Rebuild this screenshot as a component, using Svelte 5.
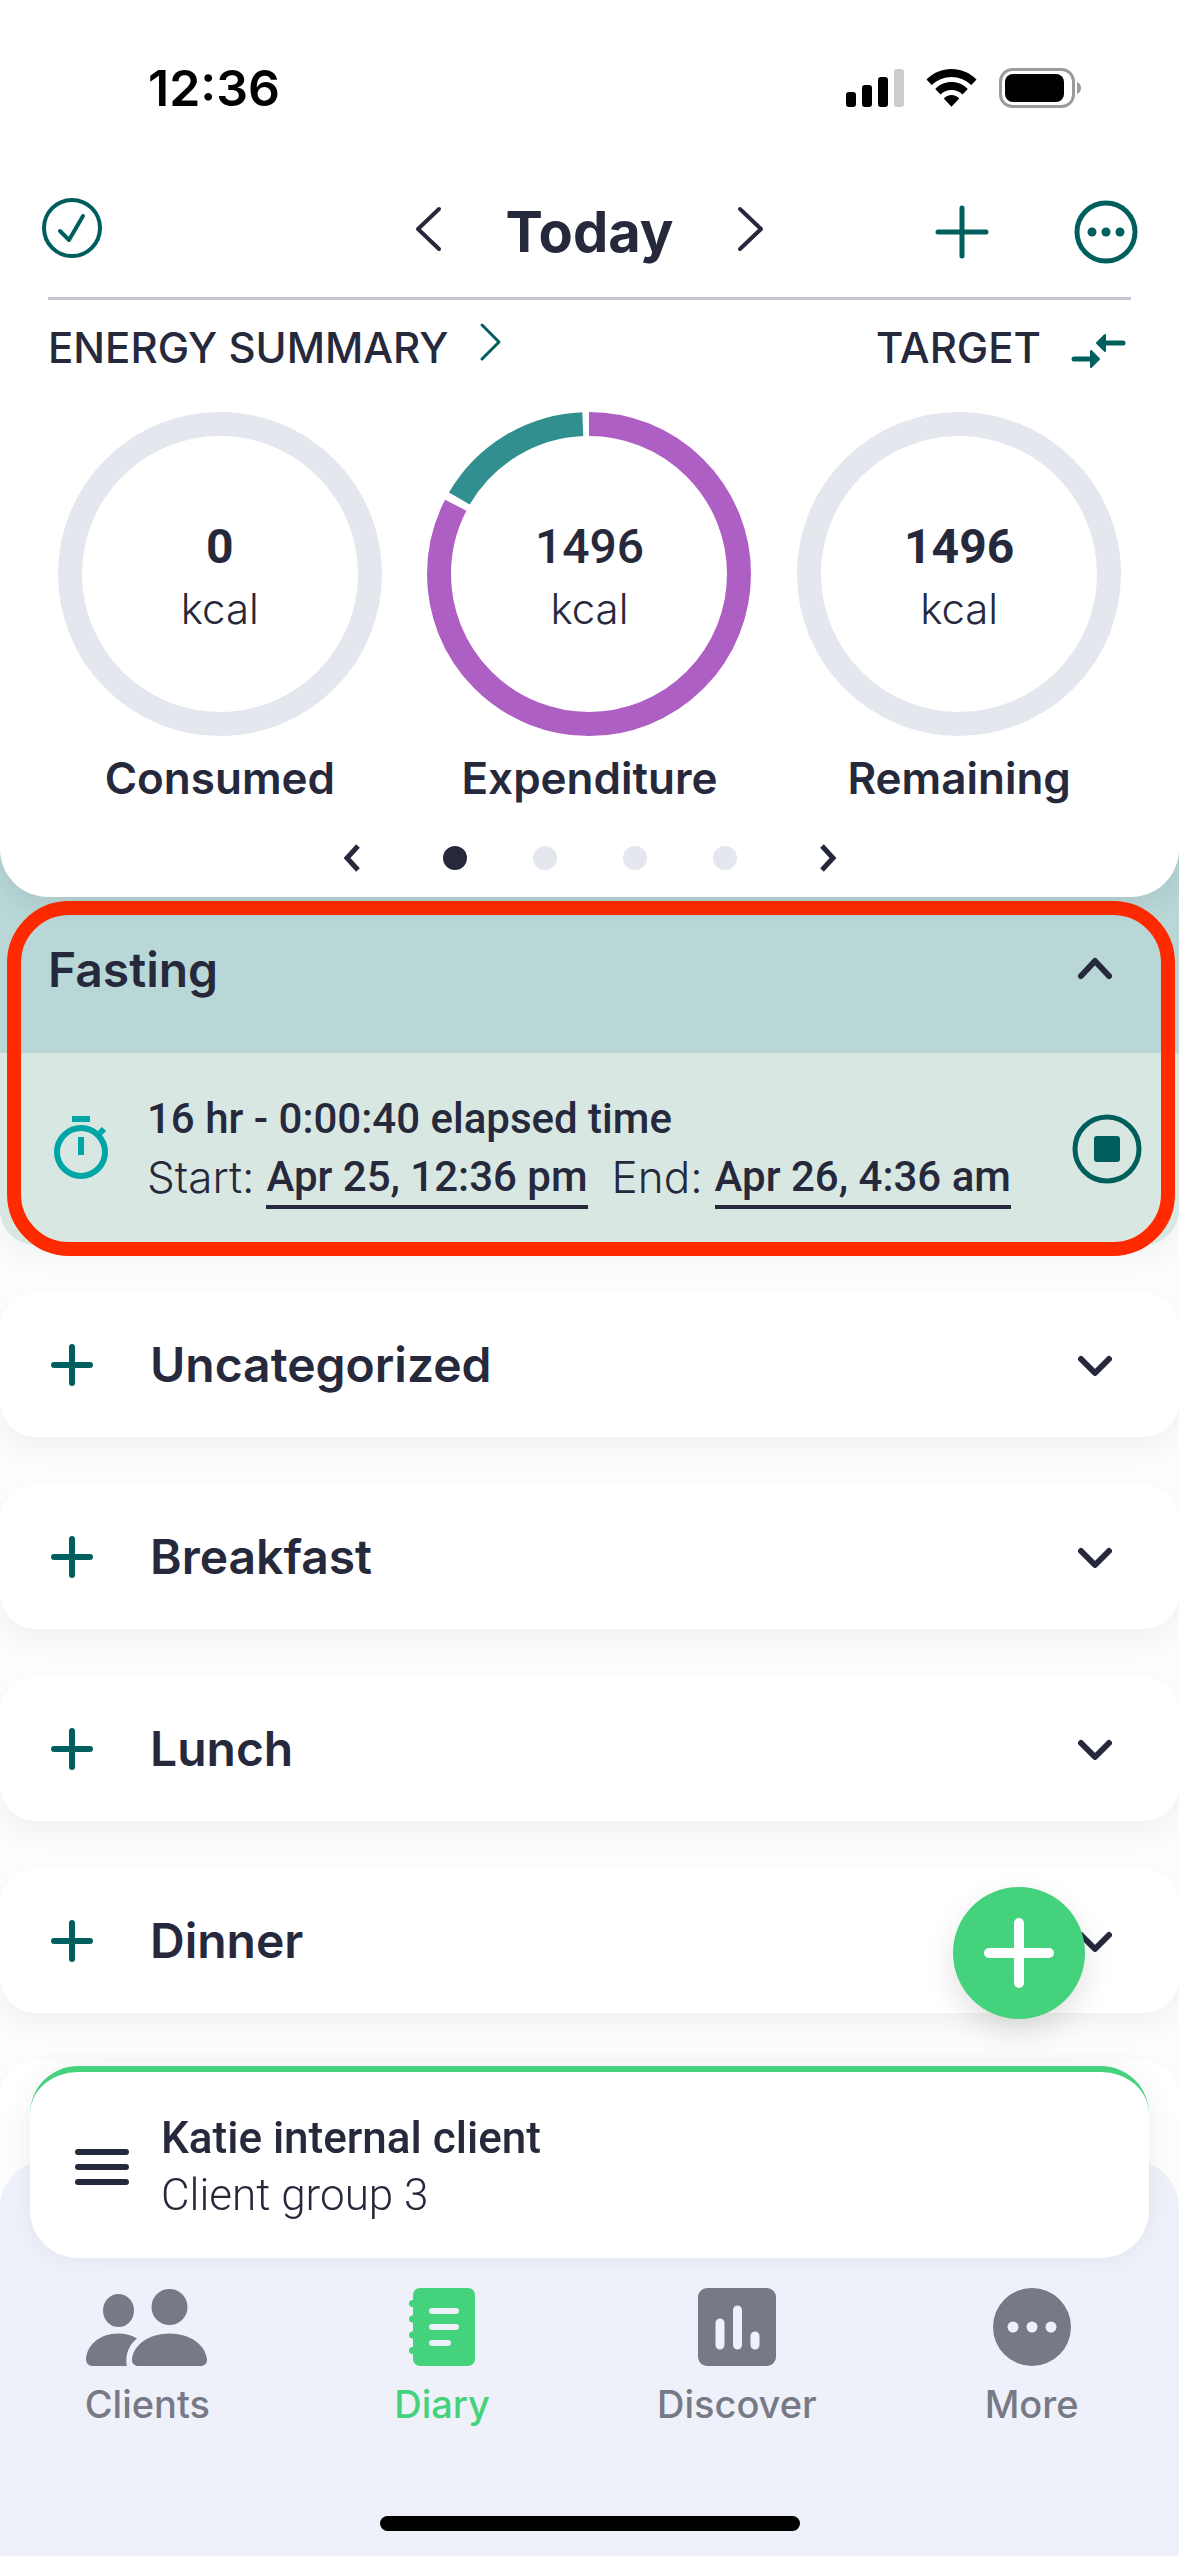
<script>
  const rings = [
    { label: 'Consumed', value: '0', strong: true, split: false },
    { label: 'Expenditure', value: '1496', strong: false, split: true },
    { label: 'Remaining', value: '1496', strong: true, split: false }
  ];
  const pages = [0, 1, 2, 3];
  const meals = ['Uncategorized', 'Breakfast', 'Lunch', 'Dinner'];
  const tabs = ['Clients', 'Diary', 'Discover', 'More'];

  let page = $state(0);
  let tab = $state('Diary');
</script>

<div class="app">
  <header class="summary">
    <div class="status">
      <span class="clock">12:36</span>
      <div class="indicators">
        <svg width="58" height="38" viewBox="0 0 58 38" aria-hidden="true">
          <rect x="0" y="23" width="10" height="15" rx="3" />
          <rect x="16" y="16" width="10" height="22" rx="3" />
          <rect x="32" y="8" width="10" height="30" rx="3" />
          <rect x="48" y="0" width="10" height="38" rx="3" fill="#ccc" />
        </svg>
        <svg width="51" height="38" viewBox="0 0 50 38" aria-hidden="true">
          <path d="M25 0C34.500 0 43 3.500 50 10.500L44.800 16C39 10.600 32.200 7.900 25 7.900S11 10.600 5.200 16L0 10.500C7 3.500 15.500 0 25 0z" />
          <path d="M25 13c6.200 0 12 2.400 16.300 7L36 25.600A15 15 0 0 0 25 21a15 15 0 0 0-11 4.600L8.700 20C13 15.400 18.800 13 25 13z" />
          <path d="M25 26c3 0 5.700 1.300 7.700 3.500L25 37.800l-7.700-8.300C19.300 27.300 22 26 25 26z" />
        </svg>
        <svg width="82" height="40" viewBox="0 0 82 40" aria-hidden="true">
          <rect x="1.500" y="1.500" width="73" height="37" rx="12" fill="none" stroke="#9b9b9b" stroke-width="3" />
          <rect x="6" y="6" width="59" height="28" rx="8" />
          <path d="M78 14c2.500 1 4 3.300 4 6s-1.500 5-4 6z" fill="#9b9b9b" />
        </svg>
      </div>
    </div>

    <div class="toolbar">
      <button class="left teal" aria-label="Mark day complete">
        <svg width="62" height="72" viewBox="0 0 62 72" fill="none" stroke="currentColor" stroke-width="4" stroke-linecap="round" stroke-linejoin="round">
          <circle cx="31" cy="32" r="28" />
          <path d="M19 35l9 9 14-24" />
        </svg>
      </button>
      <div class="day">
        <button aria-label="Previous day">
          <svg width="30" height="56" viewBox="0 0 30 56" fill="none" stroke="currentColor" stroke-width="4" stroke-linecap="round" stroke-linejoin="round"><path d="M25 5L4 25l21 20" /></svg>
        </button>
        <h1>Today</h1>
        <button aria-label="Next day">
          <svg width="30" height="56" viewBox="0 0 30 56" fill="none" stroke="currentColor" stroke-width="4" stroke-linecap="round" stroke-linejoin="round"><path d="M5 5l21 20L5 45" /></svg>
        </button>
      </div>
      <div class="right teal">
        <button aria-label="Add entry">
          <svg width="56" height="56" viewBox="0 0 56 56" fill="none" stroke="currentColor" stroke-width="5" stroke-linecap="round"><path d="M28 4v48M4 28h48" /></svg>
        </button>
        <button aria-label="More options">
          <svg width="64" height="64" viewBox="0 0 64 64" fill="currentColor">
            <circle cx="32" cy="32" r="29" fill="none" stroke="currentColor" stroke-width="5" />
            <circle cx="18" cy="32" r="4.500" /><circle cx="32" cy="32" r="4.500" /><circle cx="46" cy="32" r="4.500" />
          </svg>
        </button>
      </div>
    </div>

    <div class="heading">
      <button class="caps">
        ENERGY SUMMARY
        <svg class="teal" width="24" height="52" viewBox="0 0 24 52" fill="none" stroke="currentColor" stroke-width="3" stroke-linecap="round" stroke-linejoin="round"><path d="M4 3l17 17L4 37" /></svg>
      </button>
      <button class="caps">
        TARGET
        <svg class="teal" width="56" height="42" viewBox="0 0 56 42" fill="currentColor" stroke="currentColor" stroke-width="5" stroke-linecap="round" stroke-linejoin="round">
          <path d="M34 16h18" /><path d="M26 16l8-8v16z" stroke-width="2" />
          <path d="M3 32h18" /><path d="M28 32l-8-8v16z" stroke-width="2" />
        </svg>
      </button>
    </div>

    <div class="rings">
      {#each rings as ring}
        <div class="ring">
          <div class="dial">
            <svg viewBox="0 0 324 324" fill="none" stroke-width="24" aria-hidden="true">
              {#if ring.split}
                <g transform="rotate(-90 162 162)">
                  <circle cx="162" cy="162" r="150" pathLength="360" stroke="#ae5fc3" stroke-dasharray="297.300 62.700" />
                  <circle cx="162" cy="162" r="150" pathLength="360" stroke="#328f8f" stroke-dasharray="57.400 302.600" stroke-dashoffset="-300.200" />
                </g>
              {:else}
                <circle cx="162" cy="162" r="150" stroke="#e5e7ef" />
              {/if}
            </svg>
            <div class="reading">
              <span class="value" class:strong={ring.strong}>{ring.value}</span>
              <span class="unit">kcal</span>
            </div>
          </div>
          <span class="name">{ring.label}</span>
        </div>
      {/each}
    </div>

    <div class="pager">
      <button aria-label="Previous summary" onclick={() => (page = Math.max(0, page - 1))}>
        <svg width="20" height="30" viewBox="0 0 20 30" fill="none" stroke="currentColor" stroke-width="5"><path d="M17 3L6 15l11 12" /></svg>
      </button>
      <div class="dots">
        {#each pages as p}
          <button class="dot" class:on={p === page} aria-label={`Summary ${p + 1}`} onclick={() => (page = p)}></button>
        {/each}
      </div>
      <button aria-label="Next summary" onclick={() => (page = Math.min(3, page + 1))}>
        <svg width="20" height="30" viewBox="0 0 20 30" fill="none" stroke="currentColor" stroke-width="5"><path d="M3 3l11 12L3 27" /></svg>
      </button>
    </div>
  </header>

  <main>
    <section class="fasting">
      <button class="fast-head">
        Fasting
        <svg width="48" height="48" viewBox="0 0 48 48" fill="none" stroke="currentColor" stroke-width="6" stroke-linecap="round" stroke-linejoin="round"><path d="M10 31l14-15 14 15" /></svg>
      </button>
      <div class="fast-body">
        <svg width="58" height="72" viewBox="0 0 58 72" fill="none" stroke="#00a5a5" stroke-width="6" aria-hidden="true">
          <circle cx="29" cy="39" r="24" />
          <path d="M20 6h18M29 24v18M46 22l6-6" />
        </svg>
        <div class="fast-text">
          <p>16 hr - 0:00:40 elapsed time</p>
          <div class="times">
            <span>Start:</span><button class="date">Apr 25, 12:36 pm</button>
            <span class="end">End:</span><button class="date">Apr 26, 4:36 am</button>
          </div>
        </div>
        <button class="teal" aria-label="Stop fast">
          <svg width="72" height="72" viewBox="0 0 72 72" fill="none" stroke="currentColor" stroke-width="5">
            <circle cx="36" cy="36" r="32" />
            <rect x="23" y="23" width="26" height="26" rx="3" fill="currentColor" stroke="none" />
          </svg>
        </button>
      </div>
      <div class="callout"></div>
    </section>

    {#each meals as meal}
      <section class="meal">
        <button class="teal" aria-label={`Add to ${meal}`}>
          <svg width="48" height="48" viewBox="0 0 48 48" fill="none" stroke="currentColor" stroke-width="6" stroke-linecap="round"><path d="M24 6v36M6 24h36" /></svg>
        </button>
        <h2>{meal}</h2>
        <button aria-label={`Expand ${meal}`}>
          <svg width="48" height="48" viewBox="0 0 48 48" fill="none" stroke="currentColor" stroke-width="6" stroke-linecap="round" stroke-linejoin="round"><path d="M10 18l14 14 14-14" /></svg>
        </button>
      </section>
    {/each}
    <section class="meal"></section>
  </main>

  <footer class="dock">
    <button class="fab" aria-label="Quick add">
      <svg width="80" height="80" viewBox="0 0 80 80" fill="none" stroke="#fff" stroke-width="10" stroke-linecap="round"><path d="M40 10v60M10 40h60" /></svg>
    </button>
    <button class="client">
      <svg width="54" height="36" viewBox="0 0 54 36" fill="none" stroke="currentColor" stroke-width="6" stroke-linecap="round" aria-hidden="true"><path d="M3 3h48M3 18h48M3 33h48" /></svg>
      <span class="who">
        <strong>Katie internal client</strong>
        <span>Client group 3</span>
      </span>
    </button>
    <nav>
      {#each tabs as name}
        <button class="tab" class:on={tab === name} onclick={() => (tab = name)}>
          {#if name === 'Clients'}
            <svg width="122" height="78" viewBox="0 0 122 78" fill="currentColor">
              <ellipse cx="32.500" cy="22.500" rx="15.500" ry="16.500" />
              <circle cx="83.500" cy="19" r="18" />
              <path d="M0 71C1 57 14 45.500 32 45.500c7.500 0 13.500 1.800 19 5C43 57 39 66 40.800 78H7C3 78 0 75.500 0 71z" />
              <path d="M46 71c1.500-14 17-25.500 37.500-25.500S119.500 57 121 71c.4 4.500-2.500 7-7 7H53c-4.500 0-7.500-2.500-7-7z" />
            </svg>
          {:else if name === 'Diary'}
            <svg width="66" height="78" viewBox="0 0 66 78" fill="currentColor">
              <rect x="4" y="0" width="62" height="78" rx="7" />
              <circle cx="3.500" cy="15.500" r="3.500" /><circle cx="3.500" cy="31" r="3.500" /><circle cx="3.500" cy="47" r="3.500" /><circle cx="3.500" cy="62.500" r="3.500" />
              <path d="M23 23h24M23 39h24M23 55h16" stroke="#eef1f9" stroke-width="6" stroke-linecap="round" />
            </svg>
          {:else if name === 'Discover'}
            <svg width="78" height="78" viewBox="0 0 78 78" fill="currentColor">
              <rect width="78" height="78" rx="9" />
              <path d="M22 35v22M39.500 22v35M57 48v9" stroke="#eef1f9" stroke-width="9" stroke-linecap="round" />
            </svg>
          {:else}
            <svg width="78" height="78" viewBox="0 0 78 78" fill="currentColor">
              <circle cx="39" cy="39" r="39" />
              <g fill="#eef1f9"><circle cx="20" cy="39" r="5.500" /><circle cx="39" cy="39" r="5.500" /><circle cx="58" cy="39" r="5.500" /></g>
            </svg>
          {/if}
          {name}
        </button>
      {/each}
    </nav>
    <div class="home"><span></span></div>
  </footer>
</div>

<style>
  :global(body) { margin: 0; background: #fcfdfc; }
  .app { min-height: 100vh; color: #26293b; font-family: Inter, "Liberation Sans", sans-serif; background: #fcfefd; overflow-x: hidden; }
  .app :global(*) { box-sizing: border-box; }
  svg { display: block; flex: none; }
  button { margin: 0; padding: 0; border: 0; background: none; color: inherit; font: inherit; cursor: pointer; }
  h1, h2, p { margin: 0; }
  .teal { color: #005f5d; }

  .summary { position: relative; z-index: 1; background: #fff; border-radius: 0 0 48px 48px; padding-bottom: 9px; box-shadow: 0 6px 30px rgba(0, 0, 0, 0.09); }
  .status { display: flex; align-items: center; justify-content: space-between; height: 176px; padding: 0 98px 0 148px; color: #000; }
  .clock { font-size: 50px; font-weight: 600; line-height: 60px; }
  .indicators { display: flex; align-items: center; gap: 22px; }

  .toolbar { display: grid; grid-template-columns: 1fr auto 1fr; align-items: center; height: 124px; margin: 0 48px; border-bottom: 3px solid #c3c5d4; padding-bottom: 10px; }
  .left { justify-self: start; margin-left: -7px; }
  .day { display: flex; align-items: center; gap: 62px; }
  .day h1 { font-size: 56px; font-weight: 700; line-height: 64px; }
  .right { justify-self: end; display: flex; align-items: center; gap: 84px; margin-right: -7px; }

  .heading { display: flex; justify-content: space-between; align-items: center; height: 96px; padding: 0 52px 0 48px; }
  .caps { display: flex; align-items: center; gap: 30px; font-size: 42px; font-weight: 500; line-height: 60px; }

  .rings { display: grid; grid-template-columns: repeat(3, 1fr); padding: 16px 35px 0; }
  .ring { display: flex; flex-direction: column; align-items: center; gap: 12px; }
  .dial { display: grid; width: 324px; }
  .dial > * { grid-area: 1 / 1; }
  .reading { display: flex; flex-direction: column; align-items: center; justify-content: center; padding-top: 8px; line-height: 62px; }
  .value { font-family: Roboto, Inter, sans-serif; font-size: 48px; font-weight: 500; }
  .value.strong { font-weight: 700; }
  .unit { font-size: 42px; font-weight: 300; }
  .name { font-size: 44px; font-weight: 600; line-height: 60px; }

  .pager { display: flex; align-items: center; justify-content: center; gap: 82px; height: 60px; margin-top: 20px; }
  .dots { display: flex; gap: 66px; }
  .dot { width: 24px; height: 24px; border-radius: 50%; background: #e5e7ef; }
  .dot.on { background: #26293b; }

  main { display: flex; flex-direction: column; gap: 48px; }
  .fasting { position: relative; margin-top: -48px; padding-top: 36px; background: #b9d7d7; border-radius: 0 0 36px 36px; box-shadow: 0 12px 30px rgba(0, 0, 0, 0.05); }
  .fast-head { display: flex; align-items: center; justify-content: space-between; width: 100%; height: 168px; padding: 0 60px 0 48px; font-size: 48px; font-weight: 600; }
  .fast-body { display: flex; align-items: center; height: 192px; padding: 0 36px 0 52px; background: #d9e7e2; border-radius: 0 0 36px 36px; }
  .fast-text { flex: 1; padding-left: 37px; font-family: Roboto, Inter, sans-serif; font-size: 42px; font-weight: 500; line-height: 60px; }
  .times { display: flex; height: 60px; gap: 12px; line-height: 56px; }
  .times span { font-family: Inter, sans-serif; font-size: 44px; font-weight: 300; }
  .times .end { margin-left: 12px; }
  .date { border-bottom: 4px solid #26293b; }
  .callout { position: absolute; inset: 52px 4px -11px 7px; border: 14px solid #ff2a00; border-radius: 62px; pointer-events: none; }

  .meal { display: flex; align-items: center; height: 144px; padding: 0 60px 0 48px; background: #fff; border-radius: 36px; box-shadow: 0 12px 30px rgba(0, 0, 0, 0.05); }
  .meal h2 { flex: 1; padding-left: 54px; font-size: 48px; font-weight: 600; line-height: 60px; }

  .dock { position: fixed; right: 0; bottom: 0; left: 0; background: #fcfdfc; z-index: 2; }
  .fab { position: absolute; right: 94px; bottom: 537px; display: grid; place-items: center; width: 132px; height: 132px; border-radius: 50%; background: #45d27c; box-shadow: 0 12px 30px rgba(0, 0, 0, 0.12); }
  .client { position: relative; display: flex; align-items: center; gap: 32px; width: calc(100% - 60px); height: 192px; margin: -48px 30px 0; padding: 3px 45px 0; background: #fff; border-top: 6px solid #45d27c; border-radius: 48px; box-shadow: 0 0 30px rgba(0, 0, 0, 0.06); text-align: left; }
  .who { display: flex; flex-direction: column; font-family: Roboto, Inter, sans-serif; font-size: 44px; font-weight: 300; line-height: 57px; }
  .who strong { font-weight: 500; }
  nav { display: grid; grid-template-columns: repeat(4, 1fr); margin-top: -98px; padding-top: 128px; background: #eef1f9; border-radius: 48px 48px 0 0; }
  .tab { display: flex; flex-direction: column; align-items: center; gap: 10px; height: 228px; color: #777986; font-size: 38px; font-weight: 500; line-height: 56px; }
  .tab.on { color: #45d27c; }
  .home { display: flex; justify-content: center; height: 40px; background: #eef1f9; }
  .home span { width: 420px; height: 15px; border-radius: 8px; background: #000; }
</style>
